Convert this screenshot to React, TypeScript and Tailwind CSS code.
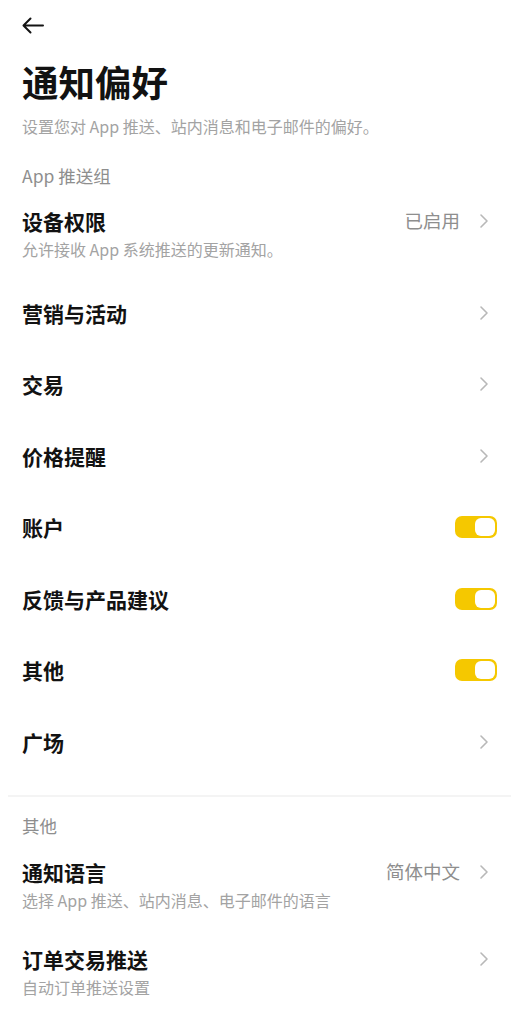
import type { ReactNode } from "react";

const font = { fontFamily: '"Noto Sans CJK SC", "Noto Sans", sans-serif' };

function Chevron() {
  return (
    <svg width="10" height="16" viewBox="0 0 10 16" fill="none" className="shrink-0">
      <path d="M2 2l6 6-6 6" stroke="#b8b8b8" strokeWidth="1.6" strokeLinecap="round" strokeLinejoin="round" />
    </svg>
  );
}

function Toggle() {
  return (
    <div className="flex h-[22px] w-[42px] items-center justify-end rounded-[7px] bg-[#f5c800] p-[2px]">
      <div className="h-[18px] w-[20px] rounded-[6px] bg-white" />
    </div>
  );
}

function SimpleRow({ label, right }: { label: string; right: ReactNode }) {
  return (
    <div className="flex h-[71.5px] items-center justify-between">
      <span className="text-[21px] leading-[26px] font-semibold text-[#121212]">{label}</span>
      {right}
    </div>
  );
}

function DetailRow({ label, value, note, className }: { label: string; value?: string; note: string; className?: string }) {
  return (
    <div className={className}>
      <div className="flex h-[26px] items-center justify-between">
        <span className="text-[21px] leading-[26px] font-semibold text-[#121212]">{label}</span>
        <div className="flex items-center gap-[19px]">
          {value && <span className="text-[18.5px] text-[#8e8e8e]">{value}</span>}
          <div className="mr-[8px]">
            <Chevron />
          </div>
        </div>
      </div>
      <p className="mt-[5px] text-[16px] leading-[20px] text-[#a3a3a3]">{note}</p>
    </div>
  );
}

export default function App() {
  return (
    <div className="min-h-[1027px] w-full bg-white" style={font}>
      <div className="px-[22px]">
        <div className="pt-[17px]">
          <svg width="22" height="17" viewBox="0 0 22 17" fill="none">
            <path d="M21 8.5H2M8.5 1.5L1.5 8.5l7 7" stroke="#141414" strokeWidth="2" strokeLinecap="round" strokeLinejoin="round" />
          </svg>
        </div>
        <h1 className="mt-[28px] text-[36.5px] leading-[40px] font-bold text-[#121212]">通知偏好</h1>
        <p className="mt-[14px] text-[16px] leading-[20px] text-[#a3a3a3]">设置您对 App 推送、站内消息和电子邮件的偏好。</p>

        <h2 className="mt-[29px] text-[17.5px] leading-[22px] text-[#8e8e8e]">App 推送组</h2>
        <DetailRow className="mt-[21px]" label="设备权限" value="已启用" note="允许接收 App 系统推送的更新通知。" />

        <div className="mt-[18px]">
          <SimpleRow label="营销与活动" right={<div className="mr-[8px]"><Chevron /></div>} />
          <SimpleRow label="交易" right={<div className="mr-[8px]"><Chevron /></div>} />
          <SimpleRow label="价格提醒" right={<div className="mr-[8px]"><Chevron /></div>} />
          <SimpleRow label="账户" right={<Toggle />} />
          <SimpleRow label="反馈与产品建议" right={<Toggle />} />
          <SimpleRow label="其他" right={<Toggle />} />
          <SimpleRow label="广场" right={<div className="mr-[8px]"><Chevron /></div>} />
        </div>
      </div>

      <div className="mx-[8px] mt-[17px] h-[2px] bg-[#f4f4f4]" />

      <div className="px-[22px]">
        <h2 className="mt-[18px] text-[17.5px] leading-[22px] text-[#8e8e8e]">其他</h2>
        <DetailRow className="mt-[22px]" label="通知语言" value="简体中文" note="选择 App 推送、站内消息、电子邮件的语言" />
        <DetailRow className="mt-[36px]" label="订单交易推送" note="自动订单推送设置" />
      </div>
    </div>
  );
}
